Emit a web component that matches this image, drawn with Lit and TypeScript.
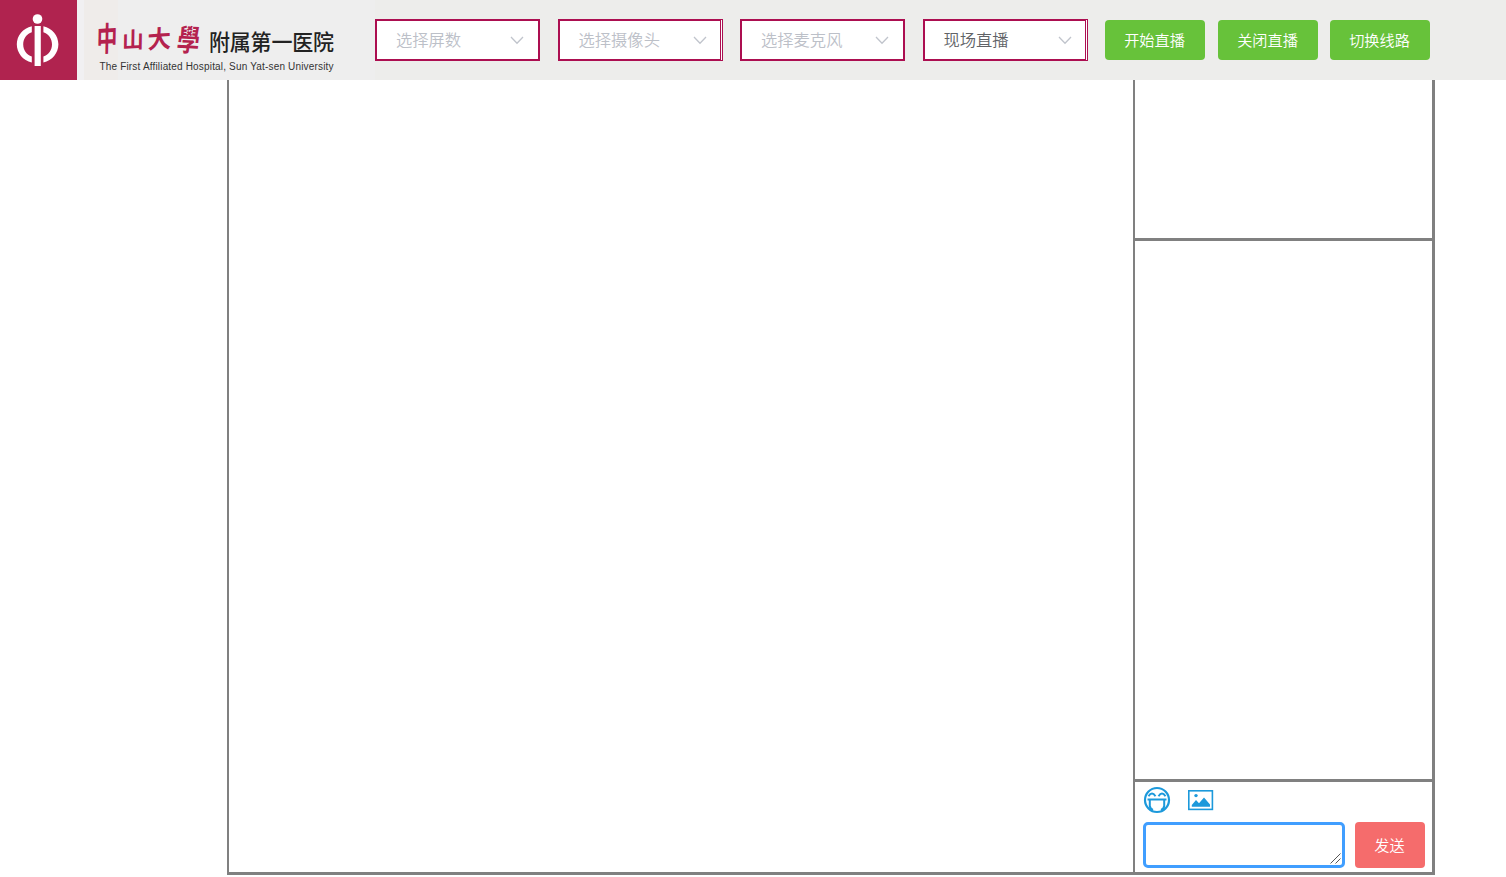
import { LitElement, html, css, svg } from "lit";
import { customElement, property } from "lit/decorators.js";
import { classMap } from "lit/directives/class-map.js";

@customElement("hospital-brand")
class HospitalBrand extends LitElement {
  static styles = css`
    :host { display: block; width: 375px; height: 80px; flex: none; }
    svg { display: block; }
    .script { font-family: "Noto Sans CJK TC", sans-serif; font-weight: 700; fill: #b4224e; }
    .name { font-family: "Noto Sans CJK SC", sans-serif; font-weight: 500; font-size: 21px; fill: #222; }
    .english { font-family: "Liberation Sans", Arial, sans-serif; font-size: 10px; fill: #333; }
  `;
  render() {
    return html`<svg width="375" height="80" viewBox="0 0 375 80">
      <rect width="375" height="80" fill="#eeeeee" />
      <rect x="77" width="7" height="80" fill="#f1f0f2" />
      <rect x="84" width="34" height="80" fill="#efecea" />
      <rect width="77" height="80" fill="#b0234f" />
      <circle cx="37.5" cy="19" r="4.8" fill="#fff" />
      <rect x="34.6" y="26" width="6.2" height="40" fill="#fff" />
      <path d="M31.8 26.2C23 28.4 16.8 35.5 16.8 44.300S23 60.500 31.800 62.600V56.600C26.700 54.800 23.200 50.200 23.200 44.300S26.700 34 31.800 32.200Z" fill="#fff" />
      <path d="M43.400 26.200C52.200 28.400 58.400 35.500 58.400 44.300S52.200 60.500 43.400 62.600V56.600C48.500 54.800 52 50.200 52 44.300S48.500 34 43.400 32.200Z" fill="#fff" />
      ${[
        { ch: "中", x: 96.5, y: 51.5, sx: 0.86, sy: 1.38, r: -3 },
        { ch: "山", x: 122, y: 48.5, sx: 0.9, sy: 0.92, r: -3 },
        { ch: "大", x: 147.5, y: 48.8, sx: 0.98, sy: 1.02, r: -4 },
        { ch: "學", x: 176, y: 50.5, sx: 0.94, sy: 1.26, r: 3 },
      ].map((g) => svg`<text class="script" font-size="24"
        transform="translate(${g.x} ${g.y}) rotate(${g.r}) skewX(-4) scale(${g.sx} ${g.sy})">${g.ch}</text>`)}
      <text class="name" transform="translate(209 50) scale(1 1.05)" textLength="125" lengthAdjust="spacing">附属第一医院</text>
      <text class="english" x="99.5" y="70" textLength="234">The First Affiliated Hospital, Sun Yat-sen University</text>
    </svg>`;
  }
}

@customElement("option-select")
class OptionSelect extends LitElement {
  @property() text = "";
  @property({ type: Boolean }) chosen = false;
  @property({ type: Boolean }) inset = false;
  static styles = css`
    :host { display: block; width: 165px; height: 42px; flex: none; }
    .frame { box-sizing: border-box; width: 165px; height: 42px; border: 1px solid #ac0e50; background: #fff; }
    .field { box-sizing: border-box; width: 163px; height: 40px; border: 1px solid #ac0e50;
      padding: 0 13px 0 19px; display: flex; align-items: center; justify-content: space-between;
      font: 16.3px/36px "Noto Sans CJK SC", sans-serif; font-weight: 350; color: #bcc0c8; }
    .field span { display: block; height: 38px; }
    .narrow { width: 162px; padding: 0 12px 0 18.5px; }
    .chosen { color: #606266; }
    svg { display: block; margin-top: -1px; }
  `;
  render() {
    return html`<div class="frame">
      <div class=${classMap({ field: true, narrow: this.inset, chosen: this.chosen })}>
        <span>${this.text}</span>
        <svg width="16" height="10" viewBox="0 0 16 10"><path d="M2 2 8 8.200 14 2" fill="none" stroke="#c0c4cc" stroke-width="1.300" /></svg>
      </div>
    </div>`;
  }
}

@customElement("app-root")
class AppRoot extends LitElement {
  static styles = css`
    :host { display: block; width: 1506px; height: 877px; overflow: hidden; background: #fff;
      font-family: "Noto Sans CJK SC", sans-serif; }
    .header { display: flex; height: 80px; background: #ededeb; }
    .selects { display: grid; grid-template-columns: 183px 182px 183px 165px; padding-top: 19px; }
    .actions { display: grid; grid-template-columns: 113px 112px 100px; padding: 20px 0 0 17px; }
    button { box-sizing: border-box; display: block; border: 0; margin: 0; padding: 0 1px 2px 0; color: #fff; border-radius: 4px;
      font: 15.2px/20px "Noto Sans CJK SC", sans-serif; font-weight: 350; }
    .green { width: 100px; height: 40px; background: #67c23a; }
    .room { box-sizing: border-box; margin-left: 227px; width: 1208px; height: 795px; display: flex;
      border: solid #808080; border-width: 0 3px 3px 2px; }
    .stage { width: 904px; flex: none; }
    .side { flex: 1; display: flex; flex-direction: column; border-left: 2px solid #808080; }
    .preview { height: 158px; border-bottom: 3px solid #808080; }
    .messages { height: 538px; border-bottom: 3px solid #808080; }
    .tools { display: flex; gap: 16px; padding: 4px 0 0 8px; height: 36px; }
    .tools svg { display: block; }
    .compose { display: flex; gap: 10px; padding-left: 8px; }
    .entry { position: relative; }
    textarea { box-sizing: border-box; display: block; width: 202px; height: 46px; margin: 0;
      border: 3px solid #409eff; border-radius: 5px; background: #fff; outline: 0; resize: none; overflow: auto; }
    .grip { position: absolute; right: 3px; bottom: 3px; pointer-events: none; }
    .send { width: 70px; height: 46px; background: #f56c6c; }
  `;
  render() {
    return html`
      <div class="header">
        <hospital-brand></hospital-brand>
        <div class="selects">
          <option-select text="选择屏数"></option-select>
          <option-select text="选择摄像头" inset></option-select>
          <option-select text="选择麦克风"></option-select>
          <option-select text="现场直播" chosen inset></option-select>
        </div>
        <div class="actions">
          ${["开始直播", "关闭直播", "切换线路"].map((t) => html`<button class="green">${t}</button>`)}
        </div>
      </div>
      <div class="room">
        <div class="stage"></div>
        <div class="side">
          <div class="preview"></div>
          <div class="messages"></div>
          <div class="tools">
            <svg width="28" height="28" viewBox="0 0 28 28" fill="none" stroke="#1c99db" stroke-width="2.2">
              <circle cx="14" cy="14" r="12" />
              <path d="M5.500 10.200Q9 5 12.500 10.200M15.500 10.200Q19 5 22.500 10.200" stroke-width="2" />
              <path d="M4.500 13.500H23.500M6.800 13.500V20Q7.200 23 10 24M21.200 13.500V20Q20.800 23 18 24" stroke-width="2" />
            </svg>
            <svg width="28" height="28" viewBox="0 0 28 28">
              <rect x="1.800" y="4.800" width="23.600" height="18.600" fill="none" stroke="#1c99db" stroke-width="1.600" />
              <circle cx="9" cy="9.600" r="1.700" fill="#1c99db" />
              <path d="M4.800 20.800V19L9 14 12 17.300 17 11.500 23 18.500V20.800Z" fill="#1c99db" />
            </svg>
          </div>
          <div class="compose">
            <div class="entry">
              <textarea></textarea>
              <svg class="grip" width="12" height="12" viewBox="0 0 12 12"><path d="M.5 10.500 10.500.5M5.500 10.500 10.500 5.500" fill="none" stroke="#555" stroke-width="1" /></svg>
            </div>
            <button class="send">发送</button>
          </div>
        </div>
      </div>`;
  }
}
